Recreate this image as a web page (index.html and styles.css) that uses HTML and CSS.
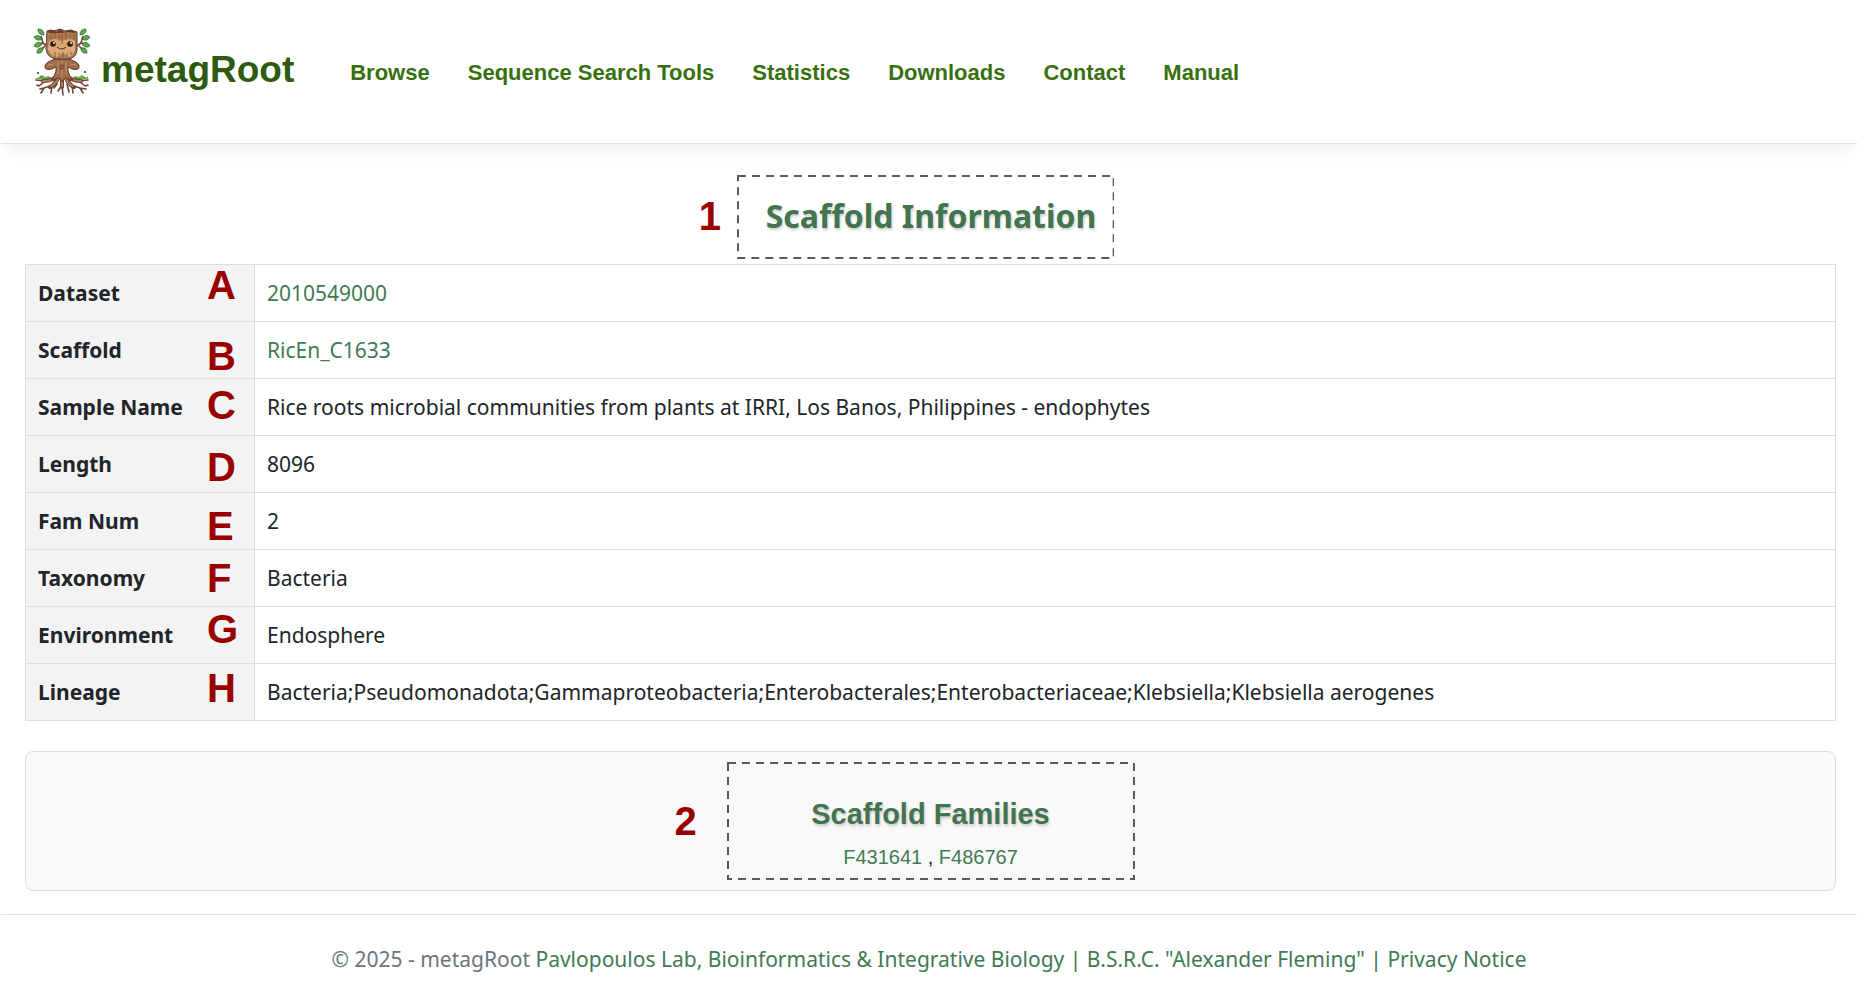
FILE: index.html
```html
<!DOCTYPE html>
<html lang="en">
<head>
    <meta charset="UTF-8">
    <meta name="viewport" content="width=device-width, initial-scale=1.0">
    <title>metagRoot</title>
    <link rel="stylesheet" href="styles.css">
</head>
<body>
    <header class="navbar">
        <a class="brand" href="#">
            <svg class="brand-logo" viewBox="0 0 56 68" aria-hidden="true">
                <!-- branches and leaves -->
                <g fill="none" stroke="#6b4636" stroke-width="1.6">
                    <path d="M13 18L9 15L7 8M9 15L4 16M11 18L7 22"/>
                    <path d="M43 18L47 15L49 8M47 15L52 16M45 18L49 22"/>
                </g>
                <g fill="#55b043" stroke="#3c5a3c" stroke-width="0.8">
                    <path d="M4 1Q10 1 10 7Q4 7 4 1zM0 9Q5 5 8 11Q3 14 0 9zM0 18Q3 12 8 16Q5 21 0 18zM3 25Q3 19 9 20Q9 26 3 25z"/>
                    <path d="M52 1Q46 1 46 7Q52 7 52 1zM56 9Q51 5 48 11Q53 14 56 9zM56 18Q53 12 48 16Q51 21 56 18zM53 25Q53 19 47 20Q47 26 53 25z"/>
                </g>
                <!-- grass and crumbs -->
                <path fill="#62b24b" d="M1 51L5 49L8 47L11 49L15 48L19 52zM55 51L51 49L48 47L45 49L41 48L37 52z"/>
                <path fill="#6f5a45" d="M3 44h2v2h-2zM50 43h2v2h-2zM6 48h1v1h-1zM53 49h1v1h-1z"/>
                <!-- roots -->
                <g fill="none" stroke="#6b4233" stroke-linecap="round" stroke-linejoin="round">
                    <path stroke-width="4" d="M24 46Q20 53 9 53M28 46L28 59M32 46Q36 53 47 53M25 48Q22 56 16 59M31 48Q34 56 40 59"/>
                    <path stroke-width="1.6" d="M12 53L2 52M10 54L5 58L3 57M16 58L10 60L7 65M18 58L17 65M28 57L24 63M28 58L29 67M44 53L54 52M46 54L51 58L54 57M40 58L46 60L49 65M38 58L39 65M33 56L35 64M23 56L20 60M10 60L6 61M46 60L52 61"/>
                </g>
                <g fill="none" stroke="#b17c55" stroke-width="2" stroke-linecap="round">
                    <path d="M25 46Q20 53 9 53M28 46L28 58M31 46Q36 53 47 53M25 49Q22 56 17 58M31 49Q34 56 39 58"/>
                </g>
                <!-- body and arms -->
                <path fill="#a06c49" stroke="#5d3c31" stroke-width="1" d="M21 31L35 31L42 34Q47 38 44 41Q40 43 34 39L34 43Q35 48 39 52L31 50L28 54L25 50L17 52Q21 48 22 43L22 39Q16 43 12 41Q9 38 14 34z"/>
                <path fill="none" stroke="#c8946a" stroke-width="1" d="M24 34L24 46M32 34L32 46M28 33L28 36M14 37L20 36M42 37L36 36M28 42L28 49"/>
                <circle cx="28" cy="39" r="2" fill="#98653f" stroke="#6a4431" stroke-width="0.8"/>
                <!-- head -->
                <path fill="#ad7a51" stroke="#5d3c31" stroke-width="1" d="M13 3L17 2L20 3L26 1L31 3L37 2L43 4L43 22Q42 31 33 31L23 31Q13 30 12 21z"/>
                <path fill="#d9a771" d="M15 13Q21 9 28 13Q34 9 41 13L41 22Q39 28 34 29L29 25L24 29Q16 28 14 21z"/>
                <path fill="#6a3a32" d="M14 3L20 2L22 4L27 1L30 4L36 2L42 4L40 5L34 4L28 5L22 5L15 5z"/>
                <path fill="none" stroke="#835639" stroke-width="0.9" d="M17 6L17 11M21 5L21 11M25 6L25 13M28 6L28 16M32 5L32 12M36 6L36 10M40 6L40 12M21 24L21 29M25 25L25 30M29 24L29 30M33 25L33 29M37 24L37 27"/>
                <circle cx="19" cy="16" r="2.8" fill="#2a1c1b"/>
                <circle cx="36" cy="16" r="2.8" fill="#2a1c1b"/>
                <circle cx="20" cy="15" r="0.9" fill="#fff"/>
                <circle cx="37" cy="15" r="0.9" fill="#fff"/>
                <path fill="none" stroke="#54281f" stroke-width="1" d="M23 19Q28 23 32 19"/>
                <ellipse cx="16" cy="21" rx="2" ry="1.6" fill="#f0ab95"/>
                <ellipse cx="39" cy="21" rx="2" ry="1.6" fill="#f0ab95"/>
            </svg>
            <span>metagRoot</span>
        </a>
        <nav class="nav-links">
            <a href="#">Browse</a>
            <a href="#">Sequence Search Tools</a>
            <a href="#">Statistics</a>
            <a href="#">Downloads</a>
            <a href="#">Contact</a>
            <a href="#">Manual</a>
        </nav>
    </header>

    <main class="container">
        <div class="title-row">
            <div class="callout callout-title">
                <svg class="callout-border" aria-hidden="true"><rect/></svg>
                <span class="marker">1</span>
                <h1>Scaffold Information</h1>
            </div>
        </div>

        <table class="info-table">
            <tr>
                <th scope="row">Dataset <span class="marker marker-a">A</span></th>
                <td><a href="#">2010549000</a></td>
            </tr>
            <tr>
                <th scope="row">Scaffold <span class="marker marker-b">B</span></th>
                <td><a href="#">RicEn_C1633</a></td>
            </tr>
            <tr>
                <th scope="row">Sample Name <span class="marker marker-c">C</span></th>
                <td>Rice roots microbial communities from plants at IRRI, Los Banos, Philippines - endophytes</td>
            </tr>
            <tr>
                <th scope="row">Length <span class="marker marker-d">D</span></th>
                <td>8096</td>
            </tr>
            <tr>
                <th scope="row">Fam Num <span class="marker marker-e">E</span></th>
                <td>2</td>
            </tr>
            <tr>
                <th scope="row">Taxonomy <span class="marker marker-f">F</span></th>
                <td>Bacteria</td>
            </tr>
            <tr>
                <th scope="row">Environment <span class="marker marker-g">G</span></th>
                <td>Endosphere</td>
            </tr>
            <tr>
                <th scope="row">Lineage <span class="marker marker-h">H</span></th>
                <td>Bacteria;Pseudomonadota;Gammaproteobacteria;Enterobacterales;Enterobacteriaceae;Klebsiella;Klebsiella aerogenes</td>
            </tr>
        </table>

        <section class="families">
            <div class="callout callout-families">
                <svg class="callout-border" aria-hidden="true"><rect/></svg>
                <span class="marker">2</span>
                <h2>Scaffold Families</h2>
                <p><a href="#">F431641</a> , <a href="#">F486767</a></p>
            </div>
        </section>
    </main>

    <footer class="footer">
        &copy; 2025 - metagRoot
        <a href="#">Pavlopoulos Lab, Bioinformatics &amp; Integrative Biology</a>
        <span class="divider">|</span>
        <a href="#">B.S.R.C. "Alexander Fleming"</a>
        <span class="divider">|</span>
        <a href="#">Privacy Notice</a>
    </footer>
</body>
</html>
```
FILE: styles.css
```css
* {
    box-sizing: border-box;
}

body {
    margin: 0 7px 0 1px;
    background-color: #fff;
    color: #212529;
    font-family: "Noto Sans", "Open Sans", sans-serif;
    font-size: 21px;
    line-height: 32px;
}

a {
    color: #417a55;
    text-decoration: none;
}

h1, h2, p {
    margin: 0;
}

.navbar {
    display: flex;
    align-items: flex-start;
    gap: 56px;
    padding: 28px 33px 47px;
    border-bottom: 1px solid #dee2e6;
    box-shadow: 0 8px 16px -4px rgba(0, 0, 0, 0.08);
    font-family: "Liberation Sans", Arial, sans-serif;
    font-weight: bold;
}

.brand {
    display: flex;
    align-items: flex-end;
    gap: 11px;
    color: #2d5a0c;
    font-size: 37px;
    line-height: 52px;
}

.brand-logo {
    width: 56px;
    height: 68px;
}

.nav-links {
    display: flex;
    gap: 38px;
    padding-top: 29px;
    font-size: 22px;
}

.nav-links a {
    color: #38700f;
}

.container {
    padding: 31px 21px 0 24px;
}

.title-row {
    display: flex;
    justify-content: center;
}

.callout {
    position: relative;
    text-align: center;
}

.callout-border {
    position: absolute;
    left: 0;
    top: 0;
    width: 100%;
    height: 100%;
}

.callout-border rect {
    x: 1px;
    y: 1px;
    width: calc(100% - 2px);
    height: calc(100% - 2px);
    fill: none;
    stroke: #595959;
    stroke-width: 2px;
    stroke-dasharray: 8 6;
}

.marker {
    position: absolute;
    color: #900;
    font-family: "Liberation Sans", Arial, sans-serif;
    font-size: 40px;
    font-weight: bold;
    line-height: 40px;
}

.callout-title {
    margin: 0 10px 5px 0;
    padding: 16px 18px 18px 29px;
}

.callout-title .marker {
    left: -38px;
    top: 21px;
}

h1 {
    color: #41744f;
    font-size: 32px;
    line-height: 50px;
    text-shadow: 1px 2px 3px rgba(0, 0, 0, 0.2);
}

.info-table {
    width: 100%;
    border-collapse: collapse;
}

.info-table th,
.info-table td {
    padding: 12px;
    border: 1px solid #dedede;
    text-align: left;
}

.info-table th {
    position: relative;
    width: 229px;
    background-color: #f3f3f3;
}

.info-table .marker {
    left: 181px;
}

.marker-a { top: 0; }
.marker-b { top: 14px; }
.marker-c { top: 6px; }
.marker-d { top: 11px; }
.marker-e { top: 13px; }
.marker-f { top: 8px; }
.marker-g { top: 2px; }
.marker-h { top: 4px; }

.families {
    display: flex;
    justify-content: center;
    margin-top: 30px;
    padding: 10px;
    border: 1px solid #dedede;
    border-radius: 8px;
    background-color: #f9f9f9;
    font-family: "Liberation Sans", Arial, sans-serif;
}

.callout-families {
    width: 408px;
    padding: 33px 16px 7px;
}

.callout-families .marker {
    left: -52px;
    top: 39px;
}

h2 {
    color: #41744f;
    font-size: 29px;
    line-height: 38px;
    text-shadow: 1px 2px 3px rgba(0, 0, 0, 0.2);
}

.callout-families p {
    margin-top: 8px;
    font-size: 20px;
}

.footer {
    margin-top: 23px;
    padding: 28px 16px;
    border-top: 1px solid #dee2e6;
    color: #6c757d;
    text-align: center;
}

.divider {
    color: #41744f;
}
```
